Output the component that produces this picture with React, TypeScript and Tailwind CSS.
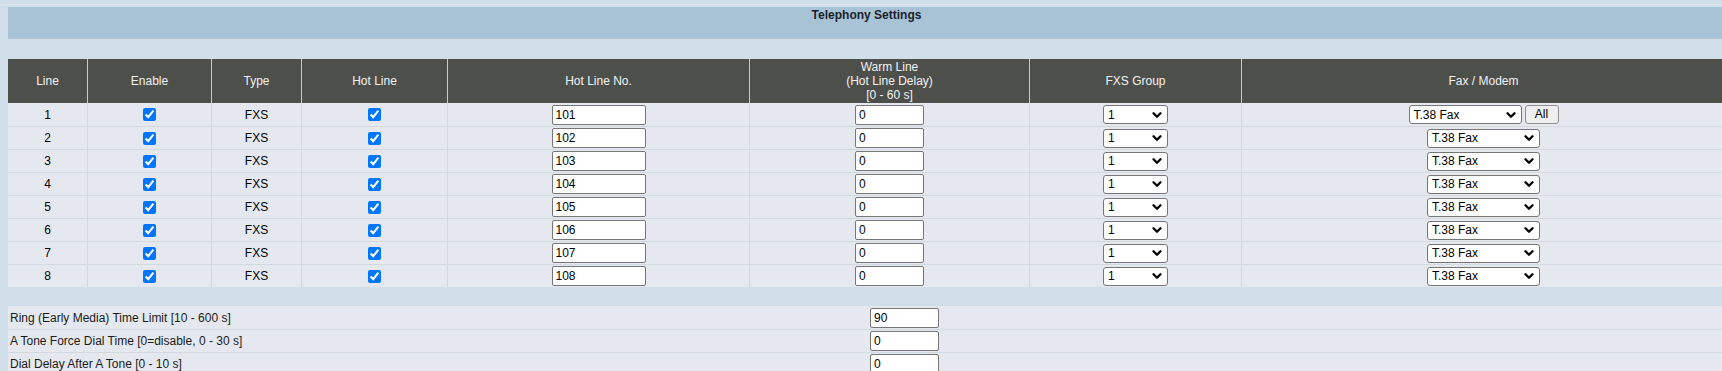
import { ChevronDown } from 'lucide-react';

const lines = [1, 2, 3, 4, 5, 6, 7, 8];

const settings = [
  { label: 'Ring (Early Media) Time Limit [10 - 600 s]', value: '90' },
  { label: 'A Tone Force Dial Time [0=disable, 0 - 30 s]', value: '0' },
  { label: 'Dial Delay After A Tone [0 - 10 s]', value: '0' },
];

function TextBox({ value, className }: { value: string; className: string }) {
  return (
    <input
      type="text"
      readOnly
      value={value}
      className={`h-[20px] rounded-[2px] border border-[#767676] bg-white px-[3px] text-[12px] leading-[18px] text-black outline-none ${className}`}
    />
  );
}

function Select({ value, className }: { value: string; className: string }) {
  return (
    <div
      className={`flex h-[19px] items-center justify-between rounded-[3px] border border-[#767676] bg-white pl-[4px] pr-[3px] text-[12px] text-black ${className}`}
    >
      <span>{value}</span>
      <ChevronDown size={14} strokeWidth={4} className="text-black" />
    </div>
  );
}

function Check() {
  return <input type="checkbox" readOnly checked className="h-[13px] w-[13px]" />;
}

export default function App() {
  const cell = 'flex items-center justify-center border-l border-[#d3d8de]';
  const head = 'flex items-center justify-center border-l border-[#c9cbc8] text-center leading-[14px]';

  return (
    <div className="h-[371px] w-[1722px] overflow-hidden bg-[#cfdee8] font-['Liberation_Sans',Arial,sans-serif] text-[12px] text-black">
      <div className="h-[4px]" />
      <div className="h-px bg-[#dbe6ec]" />
      <div className="ml-[8px] w-[1717px] pt-[2px]">
        <div className="h-[32px] bg-[#a7c3d5] pt-[1px] text-center font-bold leading-[14px] text-[#1b1d2b]">
          Telephony Settings
        </div>
        <div className="h-[20px]" />

        <div className="grid h-[44px] grid-cols-[79px_124px_90px_146px_302px_280px_212px_484px] bg-[#4d4f4b] text-[#f2f2f2]">
          <div className="flex items-center justify-center">Line</div>
          <div className={head}>Enable</div>
          <div className={head}>Type</div>
          <div className={head}>Hot Line</div>
          <div className={head}>Hot Line No.</div>
          <div className={head}>
            Warm Line
            <br />
            (Hot Line Delay)
            <br />
            [0 - 60 s]
          </div>
          <div className={head}>FXS Group</div>
          <div className={head}>Fax / Modem</div>
        </div>

        {lines.map((n) => (
          <div
            key={n}
            className={`grid h-[23px] grid-cols-[79px_124px_90px_146px_302px_280px_212px_484px] bg-[#e5e9ef] ${n > 1 ? 'border-t border-[#d3d9e0]' : ''}`}
          >
            <div className="flex items-center justify-center">{n}</div>
            <div className={cell}>
              <Check />
            </div>
            <div className={cell}>FXS</div>
            <div className={cell}>
              <Check />
            </div>
            <div className={cell}>
              <TextBox value={`${100 + n}`} className="w-[94px]" />
            </div>
            <div className={cell}>
              <TextBox value="0" className="w-[69px]" />
            </div>
            <div className={cell}>
              <Select value="1" className="w-[65px]" />
            </div>
            <div className={`${cell} gap-[3px]`}>
              <Select value="T.38 Fax" className="w-[113px]" />
              {n === 1 && (
                <button className="h-[19px] w-[34px] rounded-[3px] border border-[#8f8f8f] bg-[#efefef] text-[12px] leading-[17px] text-black">
                  All
                </button>
              )}
            </div>
          </div>
        ))}

        <div className="h-[19px]" />

        {settings.map((s, i) => (
          <div
            key={s.label}
            className={`grid h-[23px] grid-cols-[862px_1fr] bg-[#e5e9ef] ${i > 0 ? 'border-t border-[#d3d9e0]' : ''}`}
          >
            <div className="flex items-center pl-[2px] text-[#1a1a1a]">{s.label}</div>
            <div className="flex items-center">
              <TextBox value={s.value} className="w-[69px]" />
            </div>
          </div>
        ))}
      </div>
    </div>
  );
}
